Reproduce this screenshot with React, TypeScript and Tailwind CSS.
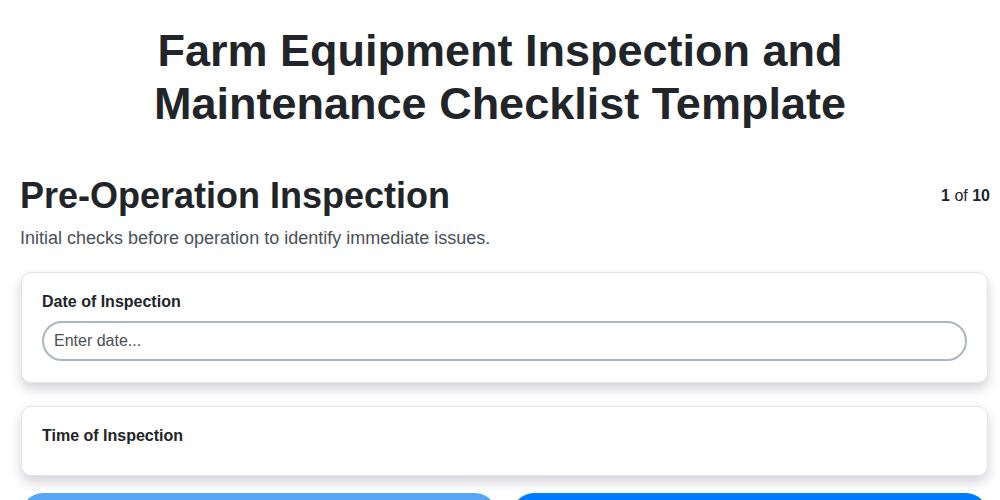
import React from 'react';

export default function App() {
  return (
    <div className="min-h-screen bg-white pt-6 text-[#212529]" style={{ fontFamily: '"Liberation Sans", Arial, sans-serif' }}>
      <h1 className="text-center text-[45px] font-bold leading-[53px] mx-auto max-w-[760px]">
        Farm Equipment Inspection and Maintenance Checklist Template
      </h1>

      <div className="pl-5 pr-[10px]">
        <div className="mt-[44px] flex items-center justify-between">
          <h2 className="text-[36px] font-bold leading-[44px]">Pre-Operation Inspection</h2>
          <div className="text-[16px]">
            <span className="font-bold">1</span> of <span className="font-bold">10</span>
          </div>
        </div>
        <p className="mt-[9px] text-[18px] leading-[22px] text-[#495057]">Initial checks before operation to identify immediate issues.</p>

        <div className="mt-[23px] ml-px mr-[2px] flex flex-col gap-[23px]">
          <div className="rounded-[10px] border border-[#e3e3ea] bg-white px-5 pt-[19px] pb-[21px] shadow-[0_6px_12px_rgba(40,40,70,0.2)]">
            <label className="block text-[16px] font-bold leading-[19px]">Date of Inspection</label>
            <input
              className="mt-[10px] block h-10 w-full rounded-full border-2 border-[#adb5bd] px-[10px] text-[16px] text-[#212529] outline-none placeholder:text-[#495057]"
              placeholder="Enter date..."
            />
          </div>
          <div className="h-[70px] rounded-[10px] border border-[#e3e3ea] bg-white px-5 pt-[19px] shadow-[0_6px_12px_rgba(40,40,70,0.2)]">
            <label className="block text-[16px] font-bold leading-[19px]">Time of Inspection</label>
          </div>
        </div>

        <div className="mt-[17px] ml-px mr-[2px] flex gap-[15px]">
          <button className="h-11 flex-1 rounded-full bg-[#58a6f6] text-white">Previous</button>
          <button className="h-11 flex-1 rounded-full bg-[#007bff] text-white">Next</button>
        </div>
      </div>
    </div>
  );
}
